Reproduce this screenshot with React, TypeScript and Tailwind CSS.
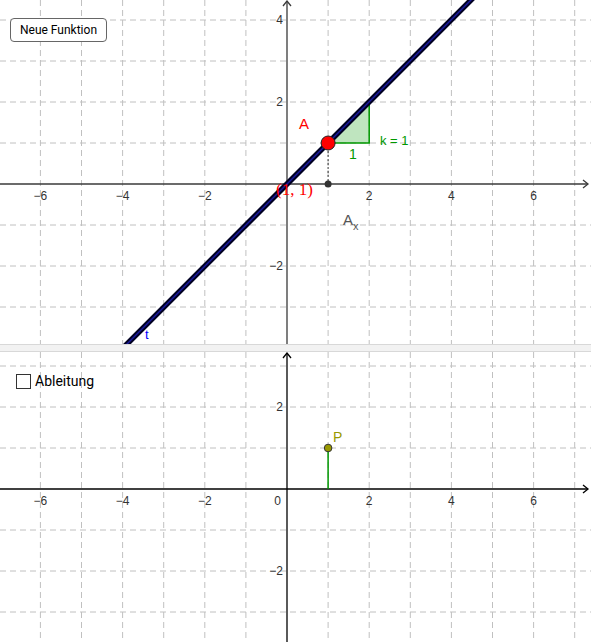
import React from "react";

const UNIT_X = 41.1;
const UNIT_Y = 41;
const OX = 287;

const xTicks = [-7, -6, -5, -4, -3, -2, -1, 1, 2, 3, 4, 5, 6, 7];
const xLabels = [-6, -4, -2, 2, 4, 6];

function fmt(n: number) {
  return n < 0 ? "\u2212" + Math.abs(n) : String(n);
}

function Grid({ oy, h }: { oy: number; h: number }) {
  const rows: number[] = [];
  for (let k = -8; k <= 8; k++) {
    const y = oy + UNIT_Y * k;
    if (k !== 0 && y > 0 && y < h) rows.push(y);
  }
  return (
    <g stroke="#c0c0c0" strokeWidth={1} strokeDasharray="6 4">
      {xTicks.map((k) => (
        <line key={"v" + k} x1={OX + UNIT_X * k} y1={0} x2={OX + UNIT_X * k} y2={h} />
      ))}
      {rows.map((y) => (
        <line key={"h" + y} x1={0} y1={y} x2={591} y2={y} />
      ))}
    </g>
  );
}

function Axes({ oy, h, color }: { oy: number; h: number; color: string }) {
  return (
    <g stroke={color} strokeWidth={1.3} fill="none">
      <line x1={0} y1={oy} x2={588} y2={oy} />
      <polyline points={`583,${oy - 4} 588,${oy} 583,${oy + 4}`} />
      <line x1={OX} y1={1} x2={OX} y2={h} />
      <polyline points={`${OX - 4},6 ${OX},1 ${OX + 4},6`} />
    </g>
  );
}

function XLabels({ oy, zero }: { oy: number; zero?: boolean }) {
  return (
    <g fill="#333" fontSize={12} fontFamily="'Liberation Sans', Arial, sans-serif">
      {xLabels.map((k) => (
        <text key={k} x={OX + UNIT_X * k} y={oy + 16} textAnchor="middle">
          {fmt(k)}
        </text>
      ))}
      {zero && (
        <text x={281} y={oy + 16} textAnchor="end">
          0
        </text>
      )}
    </g>
  );
}

function TopPanel() {
  const oy = 184;
  const h = 344;
  const ax = OX + UNIT_X;
  const ay = oy - UNIT_Y;
  return (
    <div className="relative h-[344px] w-full bg-white">
      <svg width="591" height={h} className="block">
        <Grid oy={oy} h={h} />
        <Axes oy={oy} h={h} color="#3a3a3a" />
        <XLabels oy={oy} />
        <g fill="#333" fontSize={12} fontFamily="'Liberation Sans', Arial, sans-serif" textAnchor="end">
          <text x={283} y={24}>4</text>
          <text x={283} y={106}>2</text>
          <text x={283} y={270}>{"\u22122"}</text>
        </g>

        {/* slope triangle */}
        <polygon points={`${ax},${ay} ${ax + UNIT_X},${ay} ${ax + UNIT_X},${ay - UNIT_Y}`} fill="rgba(0,153,0,0.25)" />
        <polyline
          points={`${ax},${ay} ${ax + UNIT_X},${ay} ${ax + UNIT_X},${ay - UNIT_Y}`}
          fill="none"
          stroke="#009900"
          strokeWidth={1.5}
        />

        {/* line t */}
        <line x1={OX - 220} y1={oy + 220} x2={OX + 220} y2={oy - 220} stroke="#000022" strokeWidth={5.5} />
        <line x1={OX - 220} y1={oy + 220} x2={OX + 220} y2={oy - 220} stroke="#1a1aa0" strokeWidth={1.4} />

        {/* projection */}
        <line x1={ax} y1={ay} x2={ax} y2={oy} stroke="#333" strokeWidth={1} strokeDasharray="2 2" />
        <circle cx={ax} cy={oy} r={3.5} fill="#333" />
        <circle cx={ax} cy={ay} r={7} fill="#ff0000" stroke="#222" strokeWidth={1} />

        <g fontFamily="'Liberation Sans', Arial, sans-serif" fontSize={15}>
          <text x={299} y={129} fill="#ff0000">A</text>
          <text x={343} y={225} fill="#555">
            A<tspan fontSize={11} dy={5}>x</tspan>
          </text>
          <text x={349} y={159} fill="#009900" fontSize={14}>1</text>
          <text x={380} y={145} fill="#009900" fontSize={13}>k = 1</text>
          <text x={145} y={339} fill="#0000ff" fontSize={13}>t</text>
        </g>
        <text x={276} y={195} fill="#ff0000" fontSize={17} fontFamily="'Liberation Serif', 'Times New Roman', serif">
          (1, 1)
        </text>
      </svg>
      <button className="absolute left-[10px] top-[18px] h-[24px] w-[97px] rounded-[4px] border-[1.5px] border-[#666] bg-white text-[12px] text-black font-['Roboto',sans-serif]">
        Neue Funktion
      </button>
    </div>
  );
}

function BottomPanel() {
  const oy = 137;
  const h = 290;
  const px = OX + UNIT_X;
  const py = oy - UNIT_Y;
  return (
    <div className="relative h-[290px] w-full bg-white">
      <svg width="591" height={h} className="block">
        <Grid oy={oy} h={h} />
        <Axes oy={oy} h={h} color="#000" />
        <XLabels oy={oy} zero />
        <g fill="#333" fontSize={12} fontFamily="'Liberation Sans', Arial, sans-serif" textAnchor="end">
          <text x={283} y={59}>2</text>
          <text x={283} y={223}>{"\u22122"}</text>
        </g>
        <line x1={px} y1={py} x2={px} y2={oy} stroke="#009900" strokeWidth={1.5} />
        <circle cx={px} cy={py} r={3.8} fill="#999900" stroke="#333" strokeWidth={1} />
        <text x={333} y={90} fill="#999900" fontSize={14} fontFamily="'Liberation Sans', Arial, sans-serif">
          P
        </text>
      </svg>
      <label className="absolute left-[16px] top-[19px] flex items-center gap-[4px] font-['Roboto',sans-serif] text-[14px] text-black">
        <span className="block h-[15px] w-[15px] border border-[#333] bg-white" />
        Ableitung
      </label>
    </div>
  );
}

export default function App() {
  return (
    <div className="flex h-[642px] w-[591px] flex-col overflow-hidden bg-white">
      <TopPanel />
      <div className="h-[8px] w-full border-y border-[#d8d8d8] bg-[#f2f2f2]" />
      <BottomPanel />
    </div>
  );
}
